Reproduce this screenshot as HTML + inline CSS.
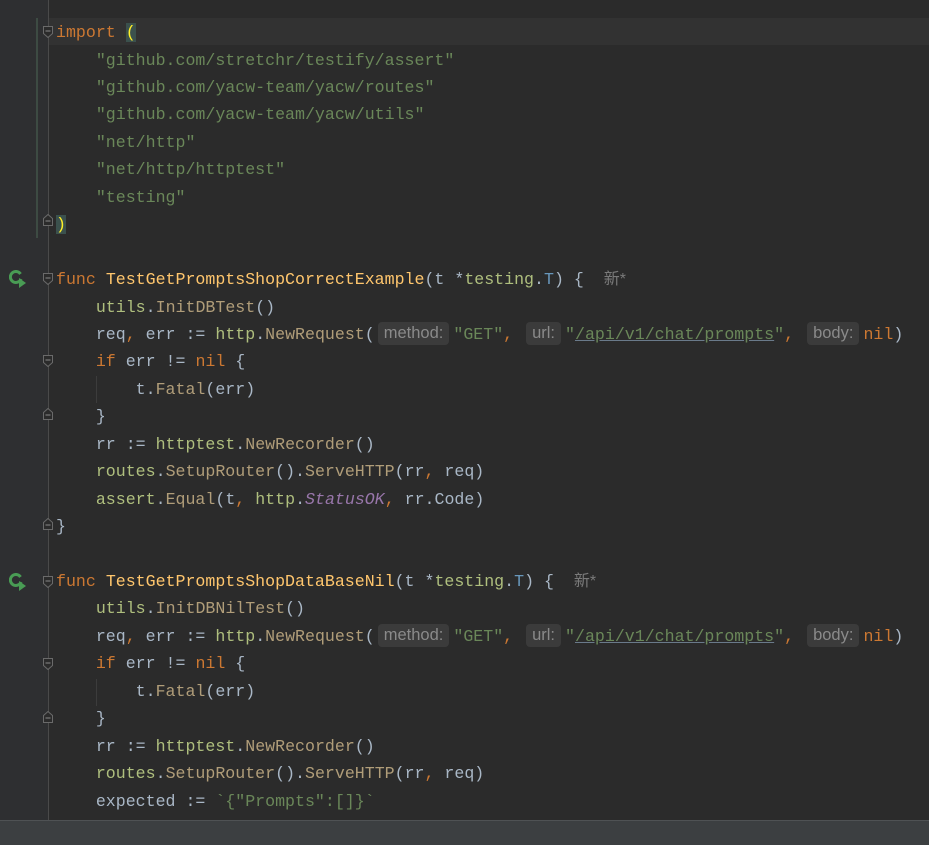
<!DOCTYPE html>
<html><head><meta charset="utf-8"><style>
html,body{margin:0;padding:0;}
body{width:929px;height:844px;background:#2b2b2b;position:relative;overflow:hidden;font-family:"Liberation Mono",monospace;font-size:16.6px;color:#a9b7c6;}
.gut{position:absolute;left:0;top:0;width:48px;height:820px;background:#2e2f31;}
.gl{position:absolute;left:48px;top:0;width:1px;height:820px;background:#4a4a4a;}
.cur{position:absolute;left:49px;right:0;top:18px;height:27px;background:#323232;}
.ln{position:absolute;left:56px;height:27.45px;line-height:27.45px;white-space:pre;margin-top:1px;}
.k{color:#cc7832}.s{color:#6a8759}.f{color:#ffc66d}.p{color:#afbf7e}.m{color:#b09d79}.c{color:#9876aa;font-style:italic}.t{color:#6897bb}
.u{text-decoration:underline;text-decoration-color:#6a7a8a}
.h{display:inline-block;font-family:"Liberation Sans",sans-serif;font-size:16.5px;color:#8a8a8a;background:#3b3b3b;border-radius:4px;padding:0 6px;line-height:23px;margin:0 4px 0 3px;vertical-align:1px;}
.a{color:#7a7a7a;font-family:"Liberation Sans","Noto Sans CJK SC",sans-serif;font-size:16px}
.hl{background:#3b514d;color:#ffef28}
.bot{position:absolute;left:0;top:820px;width:929px;height:24px;background:#3c3f41;border-top:1px solid #4f5254;}
.fold{position:absolute;left:43px;width:10px;height:12px;}
.ig{position:absolute;width:1px;background:#3c3c3c;}
</style></head><body>
<div class="gut"></div>
<div class="cur"></div>
<div class="gl"></div>
<div style="position:absolute;left:36px;top:18px;width:2px;height:220px;background:#3d4b43"></div>
<div class="ig" style="left:96px;top:376px;height:27px"></div>
<div class="ig" style="left:96px;top:679px;height:27px"></div>
<svg class="fold" style="top:26px" viewBox="0 0 10 12"><path d="M0.5 0.5H9.5V7.5L5 11.5L0.5 7.5Z" fill="#2b2b2b" stroke="#6a6a6a"/><path d="M2.5 5H7.5" stroke="#8a8a8a"/></svg>
<svg class="fold" style="top:214px" viewBox="0 0 10 12"><path d="M0.5 11.5H9.5V4.5L5 0.5L0.5 4.5Z" fill="#2b2b2b" stroke="#6a6a6a"/><path d="M2.5 7H7.5" stroke="#8a8a8a"/></svg>
<svg class="fold" style="top:273px" viewBox="0 0 10 12"><path d="M0.5 0.5H9.5V7.5L5 11.5L0.5 7.5Z" fill="#2b2b2b" stroke="#6a6a6a"/><path d="M2.5 5H7.5" stroke="#8a8a8a"/></svg>
<svg class="fold" style="top:355px" viewBox="0 0 10 12"><path d="M0.5 0.5H9.5V7.5L5 11.5L0.5 7.5Z" fill="#2b2b2b" stroke="#6a6a6a"/><path d="M2.5 5H7.5" stroke="#8a8a8a"/></svg>
<svg class="fold" style="top:408px" viewBox="0 0 10 12"><path d="M0.5 11.5H9.5V4.5L5 0.5L0.5 4.5Z" fill="#2b2b2b" stroke="#6a6a6a"/><path d="M2.5 7H7.5" stroke="#8a8a8a"/></svg>
<svg class="fold" style="top:518px" viewBox="0 0 10 12"><path d="M0.5 11.5H9.5V4.5L5 0.5L0.5 4.5Z" fill="#2b2b2b" stroke="#6a6a6a"/><path d="M2.5 7H7.5" stroke="#8a8a8a"/></svg>
<svg class="fold" style="top:576px" viewBox="0 0 10 12"><path d="M0.5 0.5H9.5V7.5L5 11.5L0.5 7.5Z" fill="#2b2b2b" stroke="#6a6a6a"/><path d="M2.5 5H7.5" stroke="#8a8a8a"/></svg>
<svg class="fold" style="top:658px" viewBox="0 0 10 12"><path d="M0.5 0.5H9.5V7.5L5 11.5L0.5 7.5Z" fill="#2b2b2b" stroke="#6a6a6a"/><path d="M2.5 5H7.5" stroke="#8a8a8a"/></svg>
<svg class="fold" style="top:711px" viewBox="0 0 10 12"><path d="M0.5 11.5H9.5V4.5L5 0.5L0.5 4.5Z" fill="#2b2b2b" stroke="#6a6a6a"/><path d="M2.5 7H7.5" stroke="#8a8a8a"/></svg>
<svg style="position:absolute;left:9px;top:270px" width="18" height="18" viewBox="0 0 18 18"><path d="M11.5 4A5.5 5.5 0 1 0 12 9" fill="none" stroke="#499c54" stroke-width="3"/><path d="M4 7L6.5 9.5L10 5" stroke="#2e2f31" stroke-width="2" fill="none"/><path d="M10 8L17 13L10 18Z" fill="#499c54"/></svg>
<svg style="position:absolute;left:9px;top:573px" width="18" height="18" viewBox="0 0 18 18"><path d="M11.5 4A5.5 5.5 0 1 0 12 9" fill="none" stroke="#499c54" stroke-width="3"/><path d="M4 7L6.5 9.5L10 5" stroke="#2e2f31" stroke-width="2" fill="none"/><path d="M10 8L17 13L10 18Z" fill="#499c54"/></svg>

<div class="ln" style="top:18px"><span class="k">import</span> <span class="hl">(</span></div>
<div class="ln" style="top:45.5px">    <span class="s">"github.com/stretchr/testify/assert"</span></div>
<div class="ln" style="top:73px">    <span class="s">"github.com/yacw-team/yacw/routes"</span></div>
<div class="ln" style="top:100.4px">    <span class="s">"github.com/yacw-team/yacw/utils"</span></div>
<div class="ln" style="top:127.8px">    <span class="s">"net/http"</span></div>
<div class="ln" style="top:155.3px">    <span class="s">"net/http/httptest"</span></div>
<div class="ln" style="top:182.7px">    <span class="s">"testing"</span></div>
<div class="ln" style="top:210.2px"><span class="hl">)</span></div>

<div class="ln" style="top:265px"><span class="k">func</span> <span class="f">TestGetPromptsShopCorrectExample</span>(t *<span class="p">testing</span>.<span class="t">T</span>) {  <span class="a">新*</span></div>
<div class="ln" style="top:292.5px">    <span class="p">utils</span>.<span class="m">InitDBTest</span>()</div>
<div class="ln" style="top:320px">    req<span class="k">,</span> err := <span class="p">http</span>.<span class="m">NewRequest</span>(<span class="h">method:</span><span class="s">"GET"</span><span class="k">,</span> <span class="h">url:</span><span class="s">"<span class="u">/api/v1/chat/prompts</span>"</span><span class="k">,</span> <span class="h">body:</span><span class="k">nil</span>)</div>
<div class="ln" style="top:347.4px">    <span class="k">if</span> err != <span class="k">nil</span> {</div>
<div class="ln" style="top:374.8px">        t.<span class="m">Fatal</span>(err)</div>
<div class="ln" style="top:402.3px">    }</div>
<div class="ln" style="top:429.7px">    rr := <span class="p">httptest</span>.<span class="m">NewRecorder</span>()</div>
<div class="ln" style="top:457.2px">    <span class="p">routes</span>.<span class="m">SetupRouter</span>().<span class="m">ServeHTTP</span>(rr<span class="k">,</span> req)</div>
<div class="ln" style="top:484.6px">    <span class="p">assert</span>.<span class="m">Equal</span>(t<span class="k">,</span> <span class="p">http</span>.<span class="c">StatusOK</span><span class="k">,</span> rr.Code)</div>
<div class="ln" style="top:512px">}</div>

<div class="ln" style="top:567px"><span class="k">func</span> <span class="f">TestGetPromptsShopDataBaseNil</span>(t *<span class="p">testing</span>.<span class="t">T</span>) {  <span class="a">新*</span></div>
<div class="ln" style="top:594.4px">    <span class="p">utils</span>.<span class="m">InitDBNilTest</span>()</div>
<div class="ln" style="top:621.9px">    req<span class="k">,</span> err := <span class="p">http</span>.<span class="m">NewRequest</span>(<span class="h">method:</span><span class="s">"GET"</span><span class="k">,</span> <span class="h">url:</span><span class="s">"<span class="u">/api/v1/chat/prompts</span>"</span><span class="k">,</span> <span class="h">body:</span><span class="k">nil</span>)</div>
<div class="ln" style="top:649.3px">    <span class="k">if</span> err != <span class="k">nil</span> {</div>
<div class="ln" style="top:676.8px">        t.<span class="m">Fatal</span>(err)</div>
<div class="ln" style="top:704.2px">    }</div>
<div class="ln" style="top:731.6px">    rr := <span class="p">httptest</span>.<span class="m">NewRecorder</span>()</div>
<div class="ln" style="top:759.1px">    <span class="p">routes</span>.<span class="m">SetupRouter</span>().<span class="m">ServeHTTP</span>(rr<span class="k">,</span> req)</div>
<div class="ln" style="top:786.5px">    expected := <span class="s">`{"Prompts":[]}`</span></div>
<div class="bot"></div>
</body></html>
